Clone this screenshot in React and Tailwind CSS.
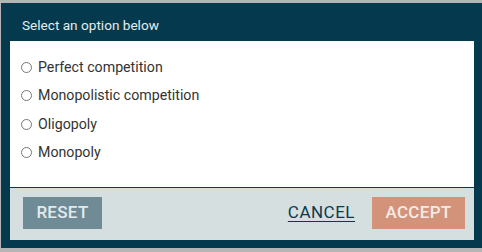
import React from "react";

const options = ["Perfect competition", "Monopolistic competition", "Oligopoly", "Monopoly"];

export default function App() {
  return (
    <div
      className="w-[482px] h-[252px] bg-[#b5b5b5] pt-[3px] pb-[4px] pl-[1px] flex flex-col"
      style={{ fontFamily: "Roboto, 'Liberation Sans', sans-serif" }}
    >
      <div className="flex-1 bg-[#053a4e] pl-[9px] pr-[8px] pb-[8px] flex flex-col">
        <div className="h-[38px] flex items-center pl-[12px] pt-[6px] text-[13.6px] text-[#e4edf0]">
          Select an option below
        </div>
        <div className="h-[146px] bg-white pt-[12px] pl-[11px] flex flex-col">
          {options.map((o) => (
            <label key={o} className="h-[28.5px] flex items-center gap-[6px] text-[14.2px] text-[#333]">
              <span className="w-[11px] h-[11px] rounded-full border border-[#767676] bg-white" />
              <span>{o}</span>
            </label>
          ))}
        </div>
        <div className="h-px bg-[#053a4e]" />
        <div className="flex-1 bg-[#d6dfe0] pt-[9px] pl-[13px] pr-[9px] flex items-start">
          <button className="w-[79px] h-[32px] bg-[#6e8b96] text-[#e3eaec] text-[17px] font-medium tracking-[0.3px]">
            RESET
          </button>
          <div className="flex-1" />
          <button className="h-[32px] mr-[17px] text-[#0b3a4d] text-[17px] underline underline-offset-[3px] tracking-[0.5px]">
            CANCEL
          </button>
          <button className="w-[93px] h-[32px] bg-[#d3937a] text-[#f3ebe7] text-[17px] font-medium tracking-[0.3px]">
            ACCEPT
          </button>
        </div>
      </div>
    </div>
  );
}
